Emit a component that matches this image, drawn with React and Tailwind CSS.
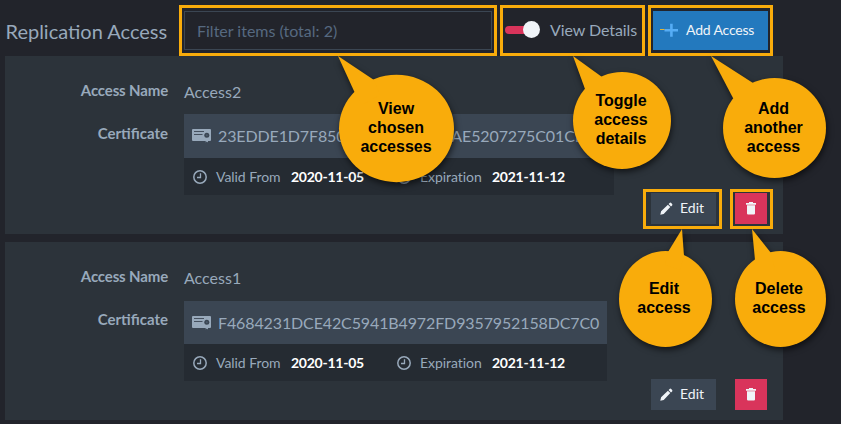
import React from "react";

function CertificateIcon() {
  return (
    <svg width="20" height="14" viewBox="0 0 20 14" className="shrink-0">
      <rect width="19" height="12" rx="1" fill="#98a9bb" />
      <path stroke="#3b4653" strokeWidth="0.900" d="M2 2.500h10M2 5.500h8.500" />
      <circle cx="14.800" cy="6.300" r="2.500" fill="#3b4653" />
      <circle cx="14.800" cy="6.300" r="1" fill="#4d5c6d" />
      <path fill="#98a9bb" d="M13.700 9h2.300V13.500l-1.150-1-1.150 1z" />
    </svg>
  );
}

function ClockIcon() {
  return (
    <svg width="14" height="14" viewBox="0 0 14 14" fill="none" stroke="#98a9bb" className="shrink-0">
      <circle cx="7" cy="7" r="6.200" strokeWidth="1.500" />
      <path d="M7.500 3.200v4.300H4" strokeWidth="1.300" />
    </svg>
  );
}

function PencilIcon() {
  return (
    <svg width="13" height="13" viewBox="0 0 13 13" fill="#f0f4f8" className="shrink-0">
      <path d="M0.300 12.700 1.100 9.300 7.900 2.700 10.300 5.100 3.700 11.900ZM8.600 2 9.600 1Q10.400 .2 11.200 1L12.100 1.900Q12.800 2.700 12.100 3.400L11 4.400Z" />
    </svg>
  );
}

function TrashIcon() {
  return (
    <svg width="10" height="13" viewBox="0 0 10 13" fill="#f0f4f8">
      <path d="M0 1h3V0h4v1h3v1.800H0ZM1 3.300h8V11.500Q9 12.600 7.900 12.600H2.100Q1 12.600 1 11.500Z" />
    </svg>
  );
}

function AccessCard({ name, hash, first }) {
  return (
    <section className="flex h-[178px] w-[778px] flex-col bg-[#2c333a]">
      <div className="flex h-[58px] pt-6 text-base leading-5">
        <div className="w-[163px] text-right text-[15px] font-bold tracking-[-0.15px]">Access Name</div>
        <div className="ml-4 pt-0.5">{name}</div>
      </div>
      <div className="flex">
        <div className="w-[163px] pt-[9px] text-right text-[15px] leading-5 font-bold">Certificate</div>
        <div className={first ? "ml-4 w-[430px]" : "ml-4 w-[423px] pt-px"}>
          <div className={first ? "flex h-[44px] items-center bg-[#3b4653] pl-2 text-base" : "flex h-[43px] items-center bg-[#3b4653] pl-2 text-base"}>
            <CertificateIcon />
            <span className="ml-[6px] tracking-[-0.12px] whitespace-nowrap">{hash}</span>
          </div>
          <div className="flex h-[37px] items-center bg-[#252b32] pl-[9px] text-sm">
            <ClockIcon />
            <span className="ml-[9px] w-[75px] tracking-[-0.05px]">Valid From</span>
            <span className="w-[106px] font-bold tracking-[-0.25px] text-white">2020-11-05</span>
            <ClockIcon />
            <span className="ml-[9px] w-[72px] tracking-[-0.05px]">Expiration</span>
            <span className="font-bold tracking-[-0.25px] text-white">2021-11-12</span>
          </div>
        </div>
      </div>
      <div className="-mt-[2px] flex justify-end gap-[19px] pr-4">
        <button className="flex h-[31px] w-[65px] items-center gap-[7px] bg-[#3b4653] pb-px pl-[9px] text-sm text-[#f0f4f8]">
          <PencilIcon />
          Edit
        </button>
        <button aria-label="Delete" className="flex h-[31px] w-8 items-center justify-center bg-[#d9345b]">
          <TrashIcon />
        </button>
      </div>
    </section>
  );
}

const callouts = [
  { cx: 396.500, cy: 128.500, rx: 57.500, ry: 53.700, tail: "338,56 374,80 380,95 362,105 354,91", tx: 396, y: 114, lines: ["View", "chosen", "accesses"] },
  { cx: 622, cy: 120.500, rx: 49, ry: 48.500, tail: "573,56 602,77 610,90 595,100 585,89", tx: 621, y: 106, lines: ["Toggle", "access", "details"] },
  { cx: 774.500, cy: 128, rx: 51.500, ry: 50, tail: "711,56 753,83 760,100 745,110 733,98", tx: 773.500, y: 114, lines: ["Add", "another", "access"] },
  { cx: 665.500, cy: 299, rx: 46.500, ry: 48, tail: "682,229 684,256 680,270 665,265 668,252", tx: 664, y: 294, lines: ["Edit", "access"] },
  { cx: 780.500, cy: 299, rx: 45.500, ry: 48, tail: "752,229 771,253 775,270 760,270 755,260", tx: 779, y: 294, lines: ["Delete", "access"] },
];

function Annotations() {
  return (
    <div className="pointer-events-none absolute inset-0">
      <div className="absolute top-[5px] left-[179px] h-[51px] w-[318px] border-[3px] border-[#f9ac0b]" />
      <div className="absolute top-[5px] left-[500px] h-[51px] w-[145px] border-[3px] border-[#f9ac0b]" />
      <div className="absolute top-[5px] left-[648px] h-[51px] w-[125px] border-[3px] border-[#f9ac0b]" />
      <div className="absolute top-[189px] left-[643px] h-[40px] w-[79px] border-[3px] border-[#f9ac0b]" />
      <div className="absolute top-[189px] left-[730px] h-[40px] w-[43px] border-[3px] border-[#f9ac0b]" />
      <svg width="841" height="424" className="absolute inset-0">
        {callouts.map((c) => (
          <g key={c.cx}>
            <g fill="#f9ac0b" className="drop-shadow-[1px_3px_3px_rgba(0,0,0,0.6)]">
              <ellipse cx={c.cx} cy={c.cy} rx={c.rx} ry={c.ry} />
              <polygon points={c.tail} />
            </g>
            <text textAnchor="middle" className="fill-black font-['Liberation_Sans',Arial,sans-serif] text-base font-bold">
              {c.lines.map((line, i) => (
                <tspan key={line} x={c.tx} y={c.y + i * 19}>{line}</tspan>
              ))}
            </text>
          </g>
        ))}
      </svg>
    </div>
  );
}

export default function App() {
  return (
    <main className="relative h-[424px] w-[841px] overflow-hidden bg-[#22242b] font-[Lato,sans-serif] text-[#98a9bb]">
      <header className="flex h-[56px] items-center pt-[5px] pl-[5.5px]">
        <h1 className="w-[178.5px] text-xl whitespace-nowrap">Replication Access</h1>
        <div className="flex h-[39px] w-[308px] items-center border border-[#3b4653] pl-3 text-base text-[#566980]">Filter items (total: 2)</div>
        <div className="ml-[13px] flex w-[148px] items-center pb-0.5">
          <div className="h-2 w-[26px] rounded-sm bg-[#d9345b]" />
          <div className="-ml-2 size-[17px] rounded-full bg-[#f0f4f8]" />
          <span className="ml-[10px] text-base tracking-[-0.08px] whitespace-nowrap">View Details</span>
        </div>
        <button className="flex h-[39px] w-[115px] items-center bg-[#2379be] pb-px pl-[7px] text-sm tracking-[-0.18px] whitespace-nowrap text-[#f0f4f8]">
          <svg width="19" height="14" viewBox="0 0 19 14" className="mr-[7px] shrink-0">
            <path stroke="#56adf5" strokeWidth="2.600" d="M4.500 7.300H18M11.400 0.800v13" />
            <path stroke="#e0b33a" d="M0 6.500h4.500" />
          </svg>
          Add Access
        </button>
      </header>
      <div className="flex flex-col gap-2 pl-[5px]">
        <AccessCard first name="Access2" hash="23EDDE1D7F8506B1C4F2D963AE5207275C01CE4" />
        <AccessCard name="Access1" hash="F4684231DCE42C5941B4972FD9357952158DC7C0" />
      </div>
      <Annotations />
    </main>
  );
}
